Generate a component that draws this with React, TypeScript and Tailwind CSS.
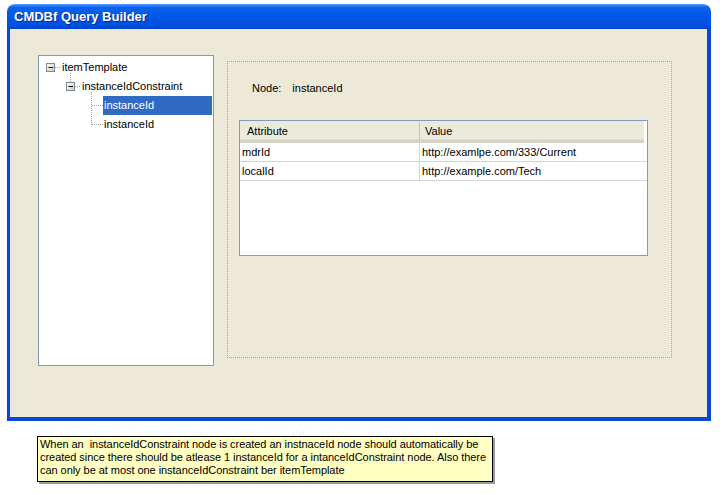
import type React from "react";

const rows = [
	{ attr: "mdrId", value: "http://examlpe.com/333/Current" },
	{ attr: "localId", value: "http://example.com/Tech" },
];

// dotted tree connectors + expander boxes, drawn over the tree rows
const TreeLines: React.FC = () => (
	<svg
		className="absolute left-0 top-0 pointer-events-none"
		width="174"
		height="90"
	>
		<defs>
			<linearGradient id="exp" x1="0" y1="0" x2="1" y2="1">
				<stop offset="0" stopColor="#ffffff" />
				<stop offset="1" stopColor="#c9c7ba" />
			</linearGradient>
		</defs>
		<g stroke="#a0a0a0" strokeDasharray="1 1" strokeWidth="1">
			<line x1="16" y1="11.5" x2="22" y2="11.5" />
			<line x1="31.5" y1="17" x2="31.5" y2="26" />
			<line x1="36" y1="30.5" x2="42" y2="30.5" />
			<line x1="52.5" y1="36" x2="52.5" y2="69" />
			<line x1="53" y1="49.5" x2="64" y2="49.5" />
			<line x1="53" y1="68.5" x2="64" y2="68.5" />
		</g>
		<rect x="7.5" y="7.5" width="8" height="8" fill="url(#exp)" stroke="#7a8a99" />
		<line x1="9.5" y1="11.5" x2="14" y2="11.5" stroke="#000" />
		<rect x="27.5" y="26.5" width="8" height="8" fill="url(#exp)" stroke="#7a8a99" />
		<line x1="29.5" y1="30.5" x2="34" y2="30.5" stroke="#000" />
	</svg>
);

const App: React.FC = () => {
	return (
		<div
			className="w-[727px] h-[495px] bg-white overflow-hidden text-[11px] text-black"
			style={{ fontFamily: '"Liberation Sans", Arial, sans-serif' }}
		>
			{/* Window */}
			<div className="ml-[7px] pt-[4px] w-[704px] flex flex-col">
				<div className="h-[25px] rounded-t-[8px] bg-[linear-gradient(to_bottom,#4a9bff_0%,#0d61ec_14%,#0056e6_50%,#0051e0_85%,#0044cf_100%)] flex items-center pl-[7px]">
					<span className="text-white font-bold text-[13px] [text-shadow:1px_1px_0_#0a2a8a]">
						CMDBf Query Builder
					</span>
				</div>
				<div className="h-[392px] bg-[#ECE9D8] border-l-[3px] border-r-[4px] border-b-[4px] border-[#0847d9] flex pl-[28px] pt-[26px]">
					{/* Tree */}
					<div className="w-[176px] h-[311px] bg-white border border-[#7F9DB9] relative pt-[2px]">
						<TreeLines />
						<div className="h-[19px] flex items-center pl-[22px]">
							<span className="px-[1px]">itemTemplate</span>
						</div>
						<div className="h-[19px] flex items-center pl-[42px]">
							<span className="px-[1px]">instanceIdConstraint</span>
						</div>
						<div className="h-[19px] flex items-stretch pl-[64px] pr-[1px]">
							<span className="flex-1 flex items-center px-[1px] bg-[#316AC5] text-white">
								instanceId
							</span>
						</div>
						<div className="h-[19px] flex items-center pl-[64px]">
							<span className="px-[1px]">instanceId</span>
						</div>
					</div>

					{/* Detail group */}
					<div className="ml-[13px] mt-[6px] w-[445px] h-[297px] border border-dotted border-[#a9a796] pl-[11px] pt-[18px]">
						<div className="h-[16px] flex items-center pl-[13px]">
							<span>Node:</span>
							<span className="ml-[11px]">instanceId</span>
						</div>
						<div className="mt-[24px] w-[409px] h-[136px] bg-white border border-[#7F9DB9]">
							<div className="flex h-[22px] pt-[1px] bg-[#EBEADB] border-b-[3px] border-b-[#D6D2C2] shadow-[inset_0_-1px_0_#E2DECD] mr-[3px]">
								<div className="w-[180px] pl-[7px] flex items-center border-r border-[#C7C5B2]">
									Attribute
								</div>
								<div className="flex-1 pl-[5px] flex items-center">Value</div>
							</div>
							{rows.map((r) => (
								<div key={r.attr} className="flex h-[19px] border-b border-[#D8D6CC]">
									<div className="w-[180px] pl-[2px] flex items-center border-r border-[#D8D6CC]">
										{r.attr}
									</div>
									<div className="flex-1 pl-[2px] flex items-center">{r.value}</div>
								</div>
							))}
						</div>
					</div>
				</div>
			</div>

			{/* Note */}
			<div className="ml-[37px] mt-[15px] w-[456px] h-[46px] bg-[#FFFFC1] border border-black shadow-[2px_2px_0_#9a9a9a] pl-[2px] pt-[1px] text-[11px] leading-[13px] whitespace-nowrap tracking-[-0.05px]">
				When an&nbsp; instanceIdConstraint node is created an instnaceId node should automatically be
				<br />
				created since there should be atlease 1 instanceId for a intanceIdConstraint node. Also there
				<br />
				can only be at most one instanceIdConstraint ber itemTemplate
			</div>
		</div>
	);
};

export default App;
